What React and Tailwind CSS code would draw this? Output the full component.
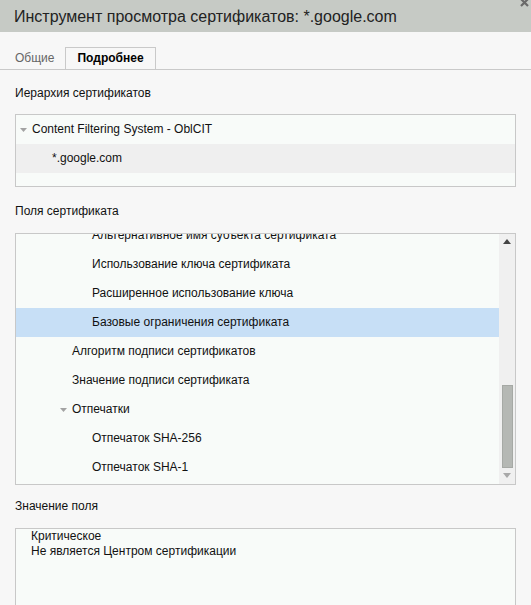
import React from 'react';

const Arrow = () => (
  <svg width="7" height="4" viewBox="0 0 7 4" className="block">
    <polygon points="0,0 7,0 3.5,4" fill="#a3a3a3" />
  </svg>
);

const Row = ({ level = 0, open, selected, shaded, children }) => (
  <div
    className={`h-[29px] flex items-center shrink-0 ${selected ? 'bg-[#c7dff6]' : shaded ? 'bg-[#efefef]' : ''}`}
    style={{ paddingLeft: 4 + level * 20 }}
  >
    <span className="w-[12px] shrink-0 flex items-center">{open && <Arrow />}</span>
    <span className="whitespace-nowrap">{children}</span>
  </div>
);

const fields = [
  { level: 3, text: 'Альтернативное имя субъекта сертификата' },
  { level: 3, text: 'Использование ключа сертификата' },
  { level: 3, text: 'Расширенное использование ключа' },
  { level: 3, text: 'Базовые ограничения сертификата', selected: true },
  { level: 2, text: 'Алгоритм подписи сертификатов' },
  { level: 2, text: 'Значение подписи сертификата' },
  { level: 2, text: 'Отпечатки', open: true },
  { level: 3, text: 'Отпечаток SHA-256' },
  { level: 3, text: 'Отпечаток SHA-1' },
];

export default function App() {
  return (
    <div className="w-[531px] h-[605px] overflow-hidden relative bg-[#f7f7f7] text-[12px] leading-[15px] text-[#111] font-['Liberation_Sans',Arial,sans-serif]">
      {/* Title bar */}
      <div className="h-[32px] bg-[#c6cac5] flex items-center pl-[14px] text-[16px] text-[#222]">
        Инструмент просмотра сертификатов: *.google.com
      </div>
      <svg width="9" height="9" viewBox="0 0 9 9" className="absolute right-[2px] top-[-2px]">
        <path d="M1 1 L8 8 M8 1 L1 8" stroke="#6a6a6a" strokeWidth="2.2" />
      </svg>

      {/* Tabs */}
      <div className="mt-[15px] h-[23px] flex items-stretch pl-[4px] border-b border-[#c9c9c9]">
        <div className="px-[11px] flex items-center text-[#666]">Общие</div>
        <div className="px-[11px] flex items-center font-bold text-black border border-b-0 border-[#c9c9c9]">
          Подробнее
        </div>
      </div>

      <div className="px-[15px]">
        <div className="mt-[16px]">Иерархия сертификатов</div>
        <div className="mt-[13px] h-[73px] border border-[#c8c8c8] bg-[#f8fbf9] flex flex-col">
          <Row level={0} open>Content Filtering System - OblCIT</Row>
          <Row level={1} shaded>*.google.com</Row>
        </div>

        <div className="mt-[17px]">Поля сертификата</div>
        <div className="mt-[14px] h-[252px] border border-[#c8c8c8] bg-[#f8fbf9] flex overflow-hidden">
          <div className="flex-1 overflow-hidden">
            <div className="flex flex-col mt-[-13px]">
              {fields.map((f, i) => (
                <Row key={i} level={f.level} open={f.open} selected={f.selected}>
                  {f.text}
                </Row>
              ))}
            </div>
          </div>
          {/* Scrollbar */}
          <div className="w-[16px] bg-[#f0f0f0] flex flex-col items-center">
            <div className="h-[14px] flex items-center justify-center">
              <svg width="8" height="5" viewBox="0 0 8 5">
                <polygon points="0,5 8,5 4,0" fill="#444" />
              </svg>
            </div>
            <div className="mt-[137px] w-[11px] h-[83px] bg-[#b5b8b4] border border-[#a6a9a5]" />
            <div className="h-[14px] flex items-center justify-center">
              <svg width="8" height="5" viewBox="0 0 8 5">
                <polygon points="0,0 8,0 4,5" fill="#a8a8a8" />
              </svg>
            </div>
          </div>
        </div>

        <div className="mt-[14px]">Значение поля</div>
        <div className="mt-[14px] h-[90px] border border-[#c8c8c8] bg-[#f8fbf9] pl-[15px] pt-[0px] leading-[15px]">
          <div>Критическое</div>
          <div>Не является Центром сертификации</div>
        </div>
      </div>
    </div>
  );
}
